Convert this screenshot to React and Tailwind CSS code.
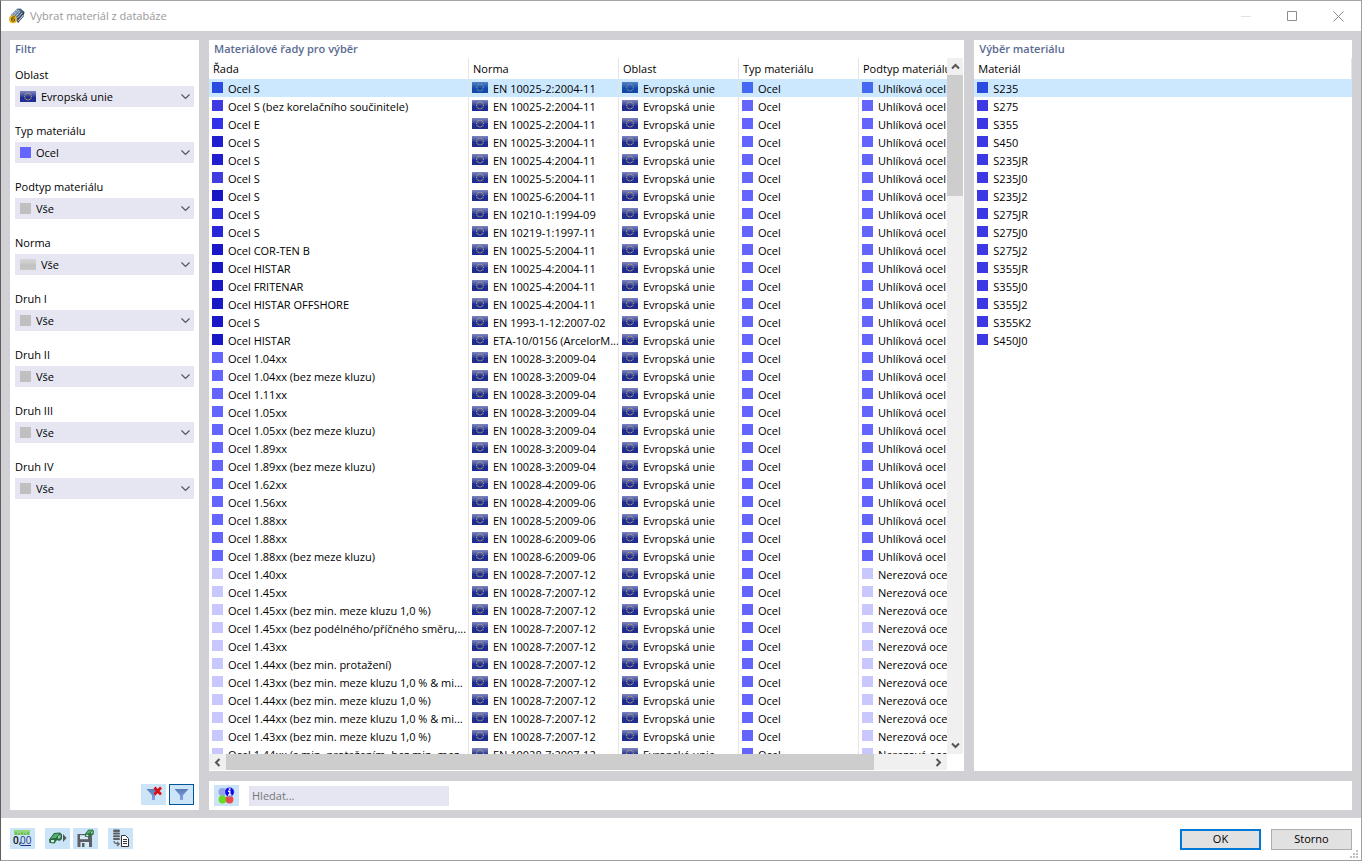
import { useState } from 'react';
import clsx from 'clsx';

const FILTERS = [
  { id: 'oblast', label: 'Oblast', value: 'Evropská unie', icon: 'flag' },
  { id: 'typ', label: 'Typ materiálu', value: 'Ocel', icon: 'steel' },
  { id: 'podtyp', label: 'Podtyp materiálu', value: 'Vše', icon: 'all' },
  { id: 'norma', label: 'Norma', value: 'Vše', icon: 'grayFlag' },
  { id: 'druh1', label: 'Druh I', value: 'Vše', icon: 'all' },
  { id: 'druh2', label: 'Druh II', value: 'Vše', icon: 'all' },
  { id: 'druh3', label: 'Druh III', value: 'Vše', icon: 'all' },
  { id: 'druh4', label: 'Druh IV', value: 'Vše', icon: 'all' },
];

// [name, standard, swatch color]
const SERIES = [
  ['Ocel S', 'EN 10025-2:2004-11', '#3b38e3'],
  ['Ocel S (bez korelačního součinitele)', 'EN 10025-2:2004-11', '#3e3ae3'],
  ['Ocel E', 'EN 10025-2:2004-11', '#3431ea'],
  ['Ocel S', 'EN 10025-3:2004-11', '#201ecf'],
  ['Ocel S', 'EN 10025-4:2004-11', '#201ecf'],
  ['Ocel S', 'EN 10025-5:2004-11', '#403de0'],
  ['Ocel S', 'EN 10025-6:2004-11', '#1816c4'],
  ['Ocel S', 'EN 10210-1:1994-09', '#2c29da'],
  ['Ocel S', 'EN 10219-1:1997-11', '#2826d8'],
  ['Ocel COR-TEN B', 'EN 10025-5:2004-11', '#1a18c6'],
  ['Ocel HISTAR', 'EN 10025-4:2004-11', '#1a18c6'],
  ['Ocel FRITENAR', 'EN 10025-4:2004-11', '#1a18c6'],
  ['Ocel HISTAR OFFSHORE', 'EN 10025-4:2004-11', '#1a18c6'],
  ['Ocel S', 'EN 1993-1-12:2007-02', '#1a18c6'],
  ['Ocel HISTAR', 'ETA-10/0156 (ArcelorM...', '#1a18c6'],
  ['Ocel 1.04xx', 'EN 10028-3:2009-04', '#6464ff'],
  ['Ocel 1.04xx (bez meze kluzu)', 'EN 10028-3:2009-04', '#6464ff'],
  ['Ocel 1.11xx', 'EN 10028-3:2009-04', '#6464ff'],
  ['Ocel 1.05xx', 'EN 10028-3:2009-04', '#6464ff'],
  ['Ocel 1.05xx (bez meze kluzu)', 'EN 10028-3:2009-04', '#6464ff'],
  ['Ocel 1.89xx', 'EN 10028-3:2009-04', '#6464ff'],
  ['Ocel 1.89xx (bez meze kluzu)', 'EN 10028-3:2009-04', '#6464ff'],
  ['Ocel 1.62xx', 'EN 10028-4:2009-06', '#6464ff'],
  ['Ocel 1.56xx', 'EN 10028-4:2009-06', '#6464ff'],
  ['Ocel 1.88xx', 'EN 10028-5:2009-06', '#6464ff'],
  ['Ocel 1.88xx', 'EN 10028-6:2009-06', '#6464ff'],
  ['Ocel 1.88xx (bez meze kluzu)', 'EN 10028-6:2009-06', '#6464ff'],
  ['Ocel 1.40xx', 'EN 10028-7:2007-12', '#c8c8ff'],
  ['Ocel 1.45xx', 'EN 10028-7:2007-12', '#c8c8ff'],
  ['Ocel 1.45xx (bez min. meze kluzu 1,0 %)', 'EN 10028-7:2007-12', '#c8c8ff'],
  ['Ocel 1.45xx (bez podélného/příčného směru,...', 'EN 10028-7:2007-12', '#c8c8ff'],
  ['Ocel 1.43xx', 'EN 10028-7:2007-12', '#c8c8ff'],
  ['Ocel 1.44xx (bez min. protažení)', 'EN 10028-7:2007-12', '#c8c8ff'],
  ['Ocel 1.43xx (bez min. meze kluzu 1,0 % & mi...', 'EN 10028-7:2007-12', '#c8c8ff'],
  ['Ocel 1.44xx (bez min. meze kluzu 1,0 %)', 'EN 10028-7:2007-12', '#c8c8ff'],
  ['Ocel 1.44xx (bez min. meze kluzu 1,0 % & mi...', 'EN 10028-7:2007-12', '#c8c8ff'],
  ['Ocel 1.43xx (bez min. meze kluzu 1,0 %)', 'EN 10028-7:2007-12', '#c8c8ff'],
  ['Ocel 1.44xx (s min. protažením, bez min. mez...', 'EN 10028-7:2007-12', '#c8c8ff'],
];

const MATERIALS = [
  'S235', 'S275', 'S355', 'S450', 'S235JR', 'S235J0', 'S235J2', 'S275JR',
  'S275J0', 'S275J2', 'S355JR', 'S355J0', 'S355J2', 'S355K2', 'S450J0',
];

const STAR_ANGLES = [0, 30, 60, 90, 120, 150, 180, 210, 240, 270, 300, 330];

const Flag = ({ gray = false, selected = false }) => (
  <svg width="16" height="11" viewBox="0 0 16 11" className="shrink-0">
    <defs>
      <linearGradient id={gray ? 'flag-gray' : 'flag-eu'} x1="0" y1="0" x2="0" y2="1">
        <stop offset="0" stopColor={gray ? '#d6d6d6' : '#7f87c4'} />
        <stop offset="0.45" stopColor={gray ? '#c9c9c9' : '#3a479c'} />
        <stop offset="0.55" stopColor={gray ? '#c0c0c0' : '#1f2d92'} />
        <stop offset="1" stopColor={gray ? '#c8c8c8' : '#1f2d92'} />
      </linearGradient>
    </defs>
    <rect width="16" height="11" fill={gray ? 'url(#flag-gray)' : 'url(#flag-eu)'} />
    {!gray &&
      STAR_ANGLES.map(a => (
        <circle
          key={a}
          cx={8 + 3.4 * Math.cos((a * Math.PI) / 180)}
          cy={5.5 + 3.4 * Math.sin((a * Math.PI) / 180)}
          r="0.6"
          fill="#c2b06a"
        />
      ))}
    {selected && <rect width="16" height="11" fill="#0078d7" opacity="0.35" />}
  </svg>
);

const Swatch = ({ color, selected = false }) => (
  <svg width="11" height="11" viewBox="0 0 11 11" className="shrink-0">
    <rect width="11" height="11" fill={color} />
    {selected && <rect width="11" height="11" fill="#0078d7" opacity="0.3" />}
  </svg>
);

const Chevron = ({ className, d, strokeWidth = 2 }) => (
  <svg width="9" height="9" viewBox="0 0 9 9" fill="none" stroke="#555" strokeWidth={strokeWidth} className={className}>
    <path d={d} />
  </svg>
);

const AppIcon = () => (
  <svg width="16" height="16" viewBox="0 0 16 16" className="shrink-0">
    <path d="M1.500 7 8 0.800 11.500 0.500 15.500 4 14.500 8.500 9 15 7 12z" fill="#4a6385" />
    <path d="M11.500 2 15.300 4.300 14.300 8.500 9 14.800 8.500 10.500z" fill="#2b3a50" />
    <path d="M2.500 7 8.300 1.500M4.500 7.500 10.300 1.800M6.500 8.500 12 2.800M8.500 10 13.500 4.500M9.300 12.800 14.500 6.800" stroke="#b9cbe0" strokeWidth="1.100" />
    <path d="M4 4.800 9 9.500M6 2.800 11.500 7.800M8.500 1 13.800 5" stroke="#5c7698" strokeWidth="0.700" />
    <circle cx="4" cy="11.300" r="4" fill="#e6b722" />
    <path d="M5.900 9C3.500 8.200 2.500 10 2.600 11.800 2.700 13.900 5.700 13.700 5.600 11.900 5.500 10.400 3.100 10.500 2.700 11.800" fill="none" stroke="#6f5410" strokeWidth="1.100" />
  </svg>
);

const FunnelIcon = ({ clear = false }) => (
  <svg width="19" height="19" viewBox="0 0 19 19">
    <defs>
      <linearGradient id="funnel" x1="0" y1="0" x2="0" y2="1">
        <stop offset="0" stopColor="#587db5" />
        <stop offset="1" stopColor="#86a0e2" />
      </linearGradient>
    </defs>
    <path d="M2.500 4h14L11 10.200V15H8v-4.800z" fill="url(#funnel)" />
    {clear && <path d="M10.500 2.500 17 9.500M17 2.500 10.500 9.500" stroke="#d80f12" strokeWidth="2.600" />}
  </svg>
);

const InfoIcon = () => (
  <svg width="17" height="17" viewBox="0 0 17 17">
    <circle cx="4.500" cy="5" r="4" fill="#93a3e6" />
    <circle cx="4.500" cy="12.500" r="3.900" fill="#66dd22" />
    <circle cx="11.500" cy="12.500" r="3.900" fill="#ea4a4a" />
    <circle cx="11.500" cy="5" r="4.800" fill="#0a0af0" stroke="#cce4f7" strokeWidth="0.600" />
    <path d="M10 4.200h1.800V8M10 8h3.500" stroke="#fff" strokeWidth="1.400" fill="none" />
    <rect x="10.800" y="1.300" width="1.700" height="1.600" fill="#fff" />
  </svg>
);

const UnitsIcon = () => (
  <svg width="19" height="19" viewBox="0 0 19 19">
    <rect x="1" y="1" width="16" height="5" fill="#8fd67c" />
    <path d="M3 3V6M6 4V6M9 3V6M12 4V6M15 3V6" stroke="#4f9b45" strokeWidth="0.800" />
    <text x="0" y="15" fontSize="10" fontFamily="Open Sans" fontWeight="600" fill="#111">0,</text>
    <text x="7" y="15" fontSize="10" fontFamily="Open Sans" fill="#1d3580">00</text>
    <path d="M7.500 16.500h10.500" stroke="#1d3580" strokeWidth="1" />
  </svg>
);

const BeamShape = () => (
  <>
    <path d="M1 10.500 6 4 12 3.500 14 5.500 14 10 11.500 12 9 11 6.500 14.500 1.500 14z" fill="#236b3c" />
    <path d="M2.500 9.500 6.500 5 11.500 4.500 8 9z" fill="#5aa873" />
    <path d="M3 11H6.200V13.200H3z" fill="#d2ecda" />
    <path d="M10 7 12.500 5.500V9L10 10z" fill="#8fcaa1" />
  </>
);

const ImportIcon = () => (
  <svg width="19" height="19" viewBox="0 0 19 19">
    <BeamShape />
    <path d="M15 5v8l3.500-4z" fill="#555" />
  </svg>
);

const SaveIcon = () => (
  <svg width="19" height="19" viewBox="0 0 19 19">
    <path d="M1.500 5h13l1.500 1.500V18H1.500z" fill="#5c5f66" />
    <path d="M4 6.200h8v4H4z" fill="#d6e9f8" />
    <path d="M4.500 13h8.500V18H4.500z" fill="#d6e9f8" />
    <path d="M6 14h2.500V18H6z" fill="#5c5f66" />
    <g transform="translate(8 -2) scale(0.7)">
      <BeamShape />
    </g>
  </svg>
);

const DatabaseIcon = () => (
  <svg width="19" height="19" viewBox="0 0 19 19" fill="none">
    <g fill="#5f5f5f">
      <rect x="2" y="0.500" width="7" height="2.500" rx="1.200" />
      <rect x="2" y="3.500" width="7" height="2" rx="1" />
      <rect x="2" y="6.200" width="7" height="2" rx="1" />
      <rect x="2" y="8.900" width="7" height="2" rx="1" />
    </g>
    <path d="M3 12c0 2.500 1.500 3 5 3M6 12.800l2.200 2.200L6 17.200" stroke="#5f5f5f" strokeWidth="1.200" />
    <path d="M10.500 6.500h4l3 3v8h-7z" fill="#fff" stroke="#333" />
    <path d="M12 10.500h4M12 12.500h4M12 14.500h4" stroke="#333" />
  </svg>
);

const ToolButton = ({ label, active = false, children }) => (
  <button
    aria-label={label}
    className={clsx(
      'w-[25px] h-[21px] flex items-center justify-center bg-[#cce4f7]',
      active && 'border border-[#005499]'
    )}
  >
    {children}
  </button>
);

const PanelTitle = ({ children }) => (
  <h2 className="h-[18px] px-[5px] leading-[18px] font-semibold text-[#5a6b92]">{children}</h2>
);

const FilterField = ({ id, label, value, icon }) => (
  <div>
    <label htmlFor={id} className="block h-[19px] leading-4">{label}</label>
    <div className="h-[21px] flex items-center bg-[#e6e6f2] pl-[5px] pr-1">
      {icon === 'flag' && <Flag />}
      {icon === 'grayFlag' && <Flag gray />}
      {icon === 'steel' && <Swatch color="#6464ff" />}
      {icon === 'all' && <Swatch color="#c0c0c0" />}
      <select id={id} className="flex-1 min-w-0 h-full pl-[5px] pt-0.5 appearance-none bg-transparent outline-none">
        <option>{value}</option>
      </select>
      <Chevron d="M0.500 2.500 4.500 6.500 8.500 2.500" strokeWidth={1.2} className="shrink-0 pointer-events-none" />
    </div>
  </div>
);

const FilterPanel = () => (
  <aside className="w-[189px] shrink-0 flex flex-col bg-white">
    <PanelTitle>Filtr</PanelTitle>
    <div className="flex-1 flex flex-col gap-4 px-[5px] pt-[9px]">
      {FILTERS.map(f => (
        <FilterField key={f.id} {...f} />
      ))}
    </div>
    <div className="flex justify-end gap-[3px] px-[5px] pb-[5px]">
      <ToolButton label="Zrušit filtr"><FunnelIcon clear /></ToolButton>
      <ToolButton label="Filtr" active><FunnelIcon /></ToolButton>
    </div>
  </aside>
);

const Cell = ({ icon, children }) => (
  <td className="h-[18px] p-0 border-r border-[#e5e5e5] last:border-r-0">
    <div className="h-[18px] flex items-start gap-[5px] pl-[3px] overflow-hidden whitespace-nowrap">
      <span className="shrink-0 flex pt-[3px]">{icon}</span>
      <span className="leading-5">{children}</span>
    </div>
  </td>
);

const HeaderCell = ({ children }) => (
  <th className="h-[21px] px-1 pt-0.5 pb-0 text-left font-normal whitespace-nowrap border-r border-[#e5e5e5]">
    {children}
  </th>
);

const SeriesTable = ({ selected, onSelect }) => (
  <table className="w-[810px] table-fixed border-separate border-spacing-0">
    <colgroup>
      <col className="w-[260px]" />
      <col className="w-[150px]" />
      <col className="w-[120px]" />
      <col className="w-[120px]" />
      <col className="w-[160px]" />
    </colgroup>
    <thead>
      <tr>
        <HeaderCell>Řada</HeaderCell>
        <HeaderCell>Norma</HeaderCell>
        <HeaderCell>Oblast</HeaderCell>
        <HeaderCell>Typ materiálu</HeaderCell>
        <HeaderCell>Podtyp materiálu</HeaderCell>
      </tr>
    </thead>
    <tbody>
      {SERIES.map(([name, norm, color], i) => {
        const isSelected = i === selected;
        const stainless = color === '#c8c8ff';
        return (
          <tr key={i} onClick={() => onSelect(i)} className={clsx(isSelected && 'bg-[#cce8ff]')}>
            <Cell icon={<Swatch color={color} selected={isSelected} />}>{name}</Cell>
            <Cell icon={<Flag selected={isSelected} />}>{norm}</Cell>
            <Cell icon={<Flag selected={isSelected} />}>Evropská unie</Cell>
            <Cell icon={<Swatch color="#6464ff" selected={isSelected} />}>Ocel</Cell>
            <Cell icon={<Swatch color={stainless ? '#c8c8ff' : '#6464ff'} selected={isSelected} />}>
              {stainless ? 'Nerezová ocel' : 'Uhlíková ocel'}
            </Cell>
          </tr>
        );
      })}
    </tbody>
  </table>
);

const SeriesPanel = () => {
  const [selected, setSelected] = useState(0);
  return (
    <section className="min-w-0 min-h-0 flex flex-col bg-white pr-px pb-px">
      <PanelTitle>Materiálové řady pro výběr</PanelTitle>
      <div className="flex-1 min-h-0 flex">
        <div className="flex-1 min-w-0 overflow-hidden">
          <SeriesTable selected={selected} onSelect={setSelected} />
        </div>
        <div className="w-4 shrink-0 flex flex-col items-center bg-[#f0f0f0]">
          <div className="h-[17px] flex items-center">
            <Chevron d="M1 6.500 4.500 3 8 6.500" />
          </div>
          <div className="w-full h-[121px] bg-[#cdcdcd]" />
          <div className="flex-1" />
          <div className="h-[17px] flex items-center">
            <Chevron d="M1 2.500 4.500 6 8 2.500" />
          </div>
        </div>
      </div>
      <div className="h-4 shrink-0 flex items-stretch bg-[#f0f0f0] mr-4">
        <div className="w-[17px] flex items-center justify-center">
          <Chevron d="M6.500 1 3 4.500 6.500 8" />
        </div>
        <div className="flex-1">
          <div className="w-[92%] h-full bg-[#cdcdcd]" />
        </div>
        <div className="w-[17px] flex items-center justify-center">
          <Chevron d="M2.500 1 6 4.500 2.500 8" />
        </div>
      </div>
    </section>
  );
};

const MaterialPanel = () => {
  const [selected, setSelected] = useState(0);
  return (
    <section className="min-w-0 bg-white">
      <PanelTitle>Výběr materiálu</PanelTitle>
      <table className="w-full table-fixed border-separate border-spacing-0">
        <thead>
          <tr>
            <HeaderCell>Materiál</HeaderCell>
          </tr>
        </thead>
        <tbody>
          {MATERIALS.map((m, i) => (
            <tr key={m} onClick={() => setSelected(i)} className={clsx(i === selected && 'bg-[#cce8ff]')}>
              <Cell icon={<Swatch color="#3c39e4" selected={i === selected} />}>{m}</Cell>
            </tr>
          ))}
        </tbody>
      </table>
    </section>
  );
};

const TitleBar = () => (
  <header className="h-[30px] shrink-0 flex items-center bg-white pl-2 text-[#999]">
    <AppIcon />
    <h1 className="flex-1 pl-[5px]">Vybrat materiál z databáze</h1>
    <button aria-label="Minimalizovat" className="w-[46px] h-full flex items-center justify-center">
      <svg width="11" height="11" viewBox="0 0 11 11"><path d="M0 5.500h10" stroke="#e3e3e3" /></svg>
    </button>
    <button aria-label="Maximalizovat" className="w-[46px] h-full flex items-center justify-center">
      <svg width="11" height="11" viewBox="0 0 11 11"><path d="M0.500 0.500h9v9h-9z" fill="none" stroke="#8c8c8c" /></svg>
    </button>
    <button aria-label="Zavřít" className="w-[46px] h-full flex items-center justify-center">
      <svg width="11" height="11" viewBox="0 0 11 11"><path d="M0.500 0.500l10 10M10.500 0.500l-10 10" stroke="#8c8c8c" /></svg>
    </button>
  </header>
);

const Footer = () => (
  <footer className="relative shrink-0 flex items-start bg-white px-[9px] py-[10px]">
    <ToolButton label="Jednotky a desetinná místa"><UnitsIcon /></ToolButton>
    <div className="flex gap-[3px] mx-[10px]">
      <ToolButton label="Načíst"><ImportIcon /></ToolButton>
      <ToolButton label="Uložit"><SaveIcon /></ToolButton>
    </div>
    <ToolButton label="Databáze"><DatabaseIcon /></ToolButton>
    <div className="flex-1 flex justify-end gap-[10px] pt-px">
      <button className="w-[81px] h-[21px] bg-[#e1e1e1] border-2 border-[#0078d7]">OK</button>
      <button className="w-[81px] h-[21px] bg-[#e1e1e1] border border-[#adadad]">Storno</button>
    </div>
    <svg width="8" height="8" viewBox="0 0 8 8" fill="#bfbfbf" className="absolute right-[3px] bottom-[2px]">
      <path d="M6 0h2v2H6zM3 3h2v2H3zM6 3h2v2H6zM0 6h2v2H0zM3 6h2v2H3zM6 6h2v2H6z" />
    </svg>
  </footer>
);

const App = () => (
  <div className="h-screen flex flex-col overflow-hidden border border-t-[#a5a5a5] border-l-[#5e5e5e] border-r-[#a0a0a0] border-b-[#a0a0a0] bg-white text-[11px] text-black font-['Open_Sans','Noto_Sans',sans-serif]">
    <TitleBar />
    <main className="flex-1 min-h-0 flex gap-[10px] bg-[#d1d0d5] px-[9px] pt-[9px] pb-2">
      <FilterPanel />
      <div className="flex-1 min-w-0 flex flex-col gap-[10px]">
        <div className="flex-1 min-h-0 grid grid-cols-[2fr_1fr] grid-rows-1 gap-[10px]">
          <SeriesPanel />
          <MaterialPanel />
        </div>
        <div className="flex items-center gap-[10px] bg-white px-[5px] py-1">
          <ToolButton label="Informace"><InfoIcon /></ToolButton>
          <input
            type="text"
            aria-label="Hledat"
            placeholder="Hledat..."
            className="w-[200px] h-5 px-[3px] bg-[#e6e6f2] placeholder:text-[#767676] outline-none"
          />
        </div>
      </div>
    </main>
    <Footer />
  </div>
);

export default App;
